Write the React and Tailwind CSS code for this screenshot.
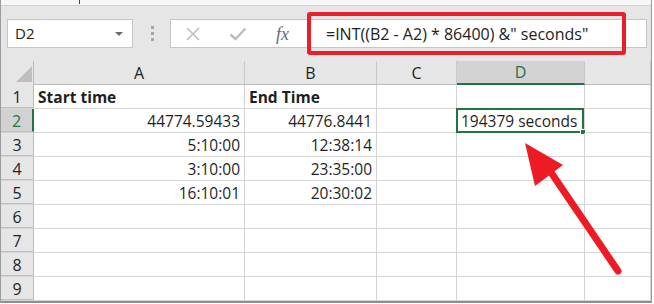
import React from 'react';

const cols = [
  { key: 'A', w: 'w-[211px]' },
  { key: 'B', w: 'w-[132px]' },
  { key: 'C', w: 'w-[80px]' },
  { key: 'D', w: 'w-[128px]' },
  { key: 'E', w: 'flex-1' },
];

const rows = [
  { n: 1, A: 'Start time', B: 'End Time', bold: true },
  { n: 2, A: '44774.59433', B: '44776.8441', D: '194379 seconds' },
  { n: 3, A: '5:10:00', B: '12:38:14' },
  { n: 4, A: '3:10:00', B: '23:35:00' },
  { n: 5, A: '16:10:01', B: '20:30:02' },
  { n: 6 },
  { n: 7 },
  { n: 8 },
  { n: 9 },
];

function Cell({ col, row }) {
  const value = row[col.key];
  const selected = row.n === 2 && col.key === 'D';
  const align = row.bold || col.key === 'D' ? 'justify-start pl-[4px]' : 'justify-end pr-[4px]';
  return (
    <div
      className={`${col.w} h-full relative flex items-center pt-[2px] border-r border-[#d4d4d4] ${align} ${
        row.bold ? 'font-bold' : ''
      }`}
    >
      {selected && (
        <div className="absolute -left-px -top-px -right-0 -bottom-px border-2 border-[#217346]">
          <div className="absolute -right-[4px] -bottom-[4px] w-[6px] h-[6px] bg-[#217346] border border-white" />
        </div>
      )}
      <span className="relative whitespace-nowrap">{value}</span>
    </div>
  );
}

export default function App() {
  return (
    <div className="w-[654px] h-[304px] bg-white overflow-hidden relative text-[#1f1f1f] font-['Open_Sans',sans-serif]">
      <div className="w-[652px] border-l border-r border-[#9c9c9c]">
        {/* ribbon edge */}
        <div className="h-[6px] bg-[#f7f7f7] border-b border-[#d0d0d0] relative">
          <div className="absolute left-[78px] top-0 w-px h-[4px] bg-[#444]" />
        </div>

        <div className="bg-[#e6e6e6]">
          {/* name box + formula bar */}
          <div className="flex items-center pt-[13px] pb-[13px]">
            <div className="ml-[6px] w-[126px] h-[29px] bg-white border border-[#c6c6c6] flex items-center justify-between pl-[7px] pr-[9px]">
              <span className="text-[15px] text-[#222]">D2</span>
              <div className="w-0 h-0 border-l-[4px] border-r-[4px] border-t-[4px] border-l-transparent border-r-transparent border-t-[#6b6b6b]" />
            </div>
            <div className="ml-[18px] flex flex-col gap-[3px]">
              <div className="w-[3px] h-[3px] bg-[#a6a6a6]" />
              <div className="w-[3px] h-[3px] bg-[#a6a6a6]" />
              <div className="w-[3px] h-[3px] bg-[#a6a6a6]" />
            </div>
            <div className="ml-[16px] w-[477px] h-[29px] bg-white border border-[#c6c6c6] flex items-center">
              <svg width="16" height="16" viewBox="0 0 16 16" className="ml-[14px]">
                <path d="M2 2 L14 14 M14 2 L2 14" stroke="#bdbdbd" strokeWidth="1.6" fill="none" />
              </svg>
              <svg width="18" height="14" viewBox="0 0 18 14" className="ml-[28px]">
                <path d="M1.5 7.5 L6.5 12 L16.5 1.5" stroke="#bdbdbd" strokeWidth="2.4" fill="none" />
              </svg>
              <span className="ml-[29px] text-[18px] italic text-[#6b6b6b] font-['Liberation_Serif',serif] leading-none">
                fx
              </span>
              <span className="ml-[37px] text-[16px] text-[#222] whitespace-nowrap">
                =INT((B2 - A2) * 86400) &amp;" seconds"
              </span>
            </div>
          </div>

          {/* column headers */}
          <div className="flex h-[24px]">
            <div className="w-[33px] h-full border-r border-[#bcbcbc] relative">
              <svg width="16" height="16" viewBox="0 0 16 16" className="absolute left-[15px] top-[5px]">
                <path d="M16 0 L16 16 L0 16 Z" fill="#bfbfbf" />
              </svg>
            </div>
            {cols.map((c) => (
              <div
                key={c.key}
                className={`${c.w} h-full flex items-center justify-center text-[16px] border-r border-[#c8c8c8] ${
                  c.key === 'D' ? 'bg-[#d2d2d2] text-[#217346] border-b-2 border-b-[#217346]' : 'border-b border-b-[#bcbcbc]'
                }`}
              >
                {c.key !== 'E' && c.key}
              </div>
            ))}
          </div>
        </div>

        {/* grid */}
        <div className="h-[218px] overflow-hidden border-b-2 border-[#8f8f8f] text-[15.5px]">
          {rows.map((r) => (
            <div key={r.n} className="flex h-[24px] border-b border-[#d4d4d4]">
              <div
                className={`w-[33px] h-full flex items-center justify-center pt-[2px] text-[16px] border-b border-[#c0c0c0] ${
                  r.n === 2
                    ? 'bg-[#d2d2d2] text-[#217346] border-r-2 border-r-[#217346]'
                    : 'bg-[#e6e6e6] border-r border-r-[#bcbcbc]'
                }`}
              >
                {r.n}
              </div>
              {cols.map((c) => (
                <Cell key={c.key} col={c} row={r} />
              ))}
            </div>
          ))}
        </div>
      </div>

      {/* annotation: red box around the formula */}
      <div className="absolute left-[307px] top-[12px] w-[319px] h-[43px] border-4 border-[#e8202a] rounded-[3px]" />

      {/* annotation: arrow */}
      <svg width="654" height="304" viewBox="0 0 654 304" className="absolute left-0 top-0 pointer-events-none">
        <line x1="618" y1="271" x2="548" y2="168" stroke="#ed1c24" strokeWidth="7" strokeLinecap="round" />
        <path d="M525 143 L535 186 L563 165 Z" fill="#ed1c24" />
      </svg>
    </div>
  );
}
